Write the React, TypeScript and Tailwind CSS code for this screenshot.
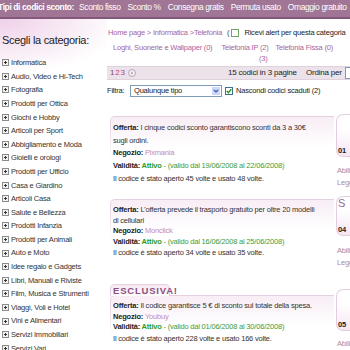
import React from 'react';

const tipi = ['Sconto fisso', 'Sconto %', 'Consegna gratis', 'Permuta usato', 'Omaggio gratuito'];

const categories = [
	'Informatica',
	'Audio, Video e Hi-Tech',
	'Fotografia',
	'Prodotti per Ottica',
	'Giochi e Hobby',
	'Articoli per Sport',
	'Abbigliamento e Moda',
	'Gioielli e orologi',
	'Prodotti per Ufficio',
	'Casa e Giardino',
	'Articoli Casa',
	'Salute e Bellezza',
	'Prodotti Infanzia',
	'Prodotti per Animali',
	'Auto e Moto',
	'Idee regalo e Gadgets',
	'Libri, Manuali e Riviste',
	'Film, Musica e Strumenti',
	'Viaggi, Voli e Hotel',
	'Vini e Alimentari',
	'Servizi Immobiliari',
	'Servizi Vari',
];

interface Offer {
	id: string;
	lines: string[];
	shop: string;
	from: string;
	to: string;
	opened: number;
	used: number;
	num: string;
	label: string;
	exclusive?: boolean;
	rowClass: string;
	leadClass: string;
	colClass: string;
	boxClass: string;
	linksClass: string;
}

const offers: Offer[] = [
	{
		id: 'o1',
		lines: ['I cinque codici sconto garantiscono sconti da 3 a 30€', 'sugli ordini.'],
		shop: 'Pixmania',
		from: '19/06/2008',
		to: '22/06/2008',
		opened: 45,
		used: 48,
		num: '01',
		label: '',
		rowClass: 'h-[83px]',
		leadClass: 'leading-[12.5px]',
		colClass: '-mt-[2px]',
		boxClass: 'h-[43px]',
		linksClass: 'mt-[8px]',
	},
	{
		id: 'o2',
		lines: ["L'offerta prevede il trasporto gratuito per oltre 20 modelli", 'di cellulari'],
		shop: 'Monclick',
		from: '16/06/2008',
		to: '25/06/2008',
		opened: 34,
		used: 35,
		num: '04',
		label: 'S',
		rowClass: 'h-[85px]',
		leadClass: 'leading-[10.5px]',
		colClass: '-mt-[3px]',
		boxClass: 'h-[40px]',
		linksClass: 'mt-[9px]',
	},
	{
		id: 'o3',
		lines: ['Il codice garantisce 5 € di sconto sul totale della spesa.'],
		shop: 'Youbuy',
		from: '01/06/2008',
		to: '30/06/2008',
		opened: 228,
		used: 166,
		num: '05',
		label: '',
		exclusive: true,
		rowClass: 'h-[80px]',
		leadClass: 'leading-[10.5px]',
		colClass: 'mt-[5px]',
		boxClass: 'h-[42px]',
		linksClass: 'mt-[7px]',
	},
];

const PlusBox = () => (
	<svg width="7" height="7" viewBox="0 0 7 7" className="mr-[2px] shrink-0">
		<rect x="0.5" y="0.5" width="6" height="6" fill="#f2f2f2" stroke="#8c8c8c" />
		<path d="M2 3.5h3M3.5 2v3" stroke="#333" strokeWidth="1" />
	</svg>
);

const CheckBox = ({ checked }: { checked?: boolean }) => (
	<svg width="8" height="8" viewBox="0 0 8 8" className="shrink-0">
		<rect x="0.5" y="0.5" width="7" height="7" fill="#fff" stroke={checked ? '#3f6f8f' : '#6aa86a'} />
		{checked && <path d="M1.8 4l1.6 1.7L6.3 2.2" fill="none" stroke="#1f9a1f" strokeWidth="1.4" />}
	</svg>
);

const OfferCard = ({ o }: { o: Offer }) => (
	<div className={`flex items-start ${o.rowClass}`}>
		<div className="ml-[3px] w-[224px] shrink-0">
			{o.exclusive && (
				<div className="relative z-10 -mb-px h-[12px] w-[60px] rounded-t-[5px] border border-b-0 border-[#e6cfe0] bg-[linear-gradient(to_bottom,#f7e8f2,#ffffff)] pl-[2px] text-[9.5px] font-bold leading-[12px] tracking-[0.8px] text-[#8c4f80]">
					ESCLUSIVA!
				</div>
			)}
			<div
				className={`rounded-tl-[5px] border-t border-[#e6cfe0] bg-[linear-gradient(to_bottom,#e6cfe0,rgba(255,255,255,0)_42px),linear-gradient(to_bottom,#f8edf5,#ffffff_30px)] bg-[length:1px_100%,100%_100%] bg-no-repeat pl-[3px] pt-[5px] ${o.leadClass}`}
			>
				{o.lines.map((line, i) => (
					<div key={i} className="whitespace-nowrap">
						{i === 0 && <b className="text-[#222]">Offerta: </b>}
						{line}
					</div>
				))}
				<div className="whitespace-nowrap">
					<b className="text-[#222]">Negozio: </b>
					<span className="text-[#c58ab6]">{o.shop}</span>
				</div>
				<div className="whitespace-nowrap">
					<b className="text-[#222]">Validità: </b>
					<b className="text-[#2e9a2e]">Attivo</b>
					<span className="text-[#3c9c3c]">
						{' '}
						- (valido dal {o.from} al {o.to})
					</span>
				</div>
				<div className="mt-[1px] whitespace-nowrap">
					Il codice è stato aperto {o.opened} volte e usato {o.used} volte.
				</div>
			</div>
		</div>
		<div className={`ml-[2px] w-[40px] shrink-0 ${o.colClass}`}>
			<div
				className={`flex flex-col justify-between rounded-l-[7px] border border-r-0 border-[#e4cdde] bg-[linear-gradient(to_bottom,#ffffff_35%,#f6e6f1)] pl-[1px] ${o.boxClass}`}
			>
				<span className="text-[11px] leading-[12px] text-[#8f6f89]">{o.label}</span>
				<span className="text-[7.5px] font-bold leading-[10px] text-[#222]">{o.num}</span>
			</div>
			<div className={`pl-[1px] leading-[12px] text-[#a88ba2] ${o.linksClass}`}>
				<div className="whitespace-nowrap">Abilita</div>
				<div className="whitespace-nowrap">Leggi</div>
			</div>
		</div>
	</div>
);

export default function App() {
	return (
		<div className="h-[350px] w-[350px] overflow-hidden bg-white font-['Liberation_Sans',Arial,sans-serif] text-[7.5px] tracking-[-0.2px] text-[#333]">
			{/* Top bar */}
			<div className="h-[19px] overflow-hidden border-b-2 border-[#83587a] bg-[#a17595]">
				<div className="-ml-[2px] flex h-[17px] items-center whitespace-nowrap pb-[3px] text-[8.5px] tracking-[-0.4px] text-white">
					<b className="mr-[5px]">Tipi di codici sconto:</b>
					<div className="flex gap-[7px]">
						{tipi.map((t) => (
							<span key={t}>{t}</span>
						))}
					</div>
				</div>
			</div>

			<div className="flex">
				{/* Sidebar */}
				<div className="w-[107px] shrink-0 bg-[radial-gradient(125px_55px_at_0%_0%,#efd0e8,#ffffff)] bg-no-repeat">
					<div className="h-[37px] pl-[2px] pt-[14px]">
						<h2 className="text-[11px] font-normal leading-[14px] tracking-[-0.3px] text-[#222]">
							Scegli la categoria:
						</h2>
					</div>
					<ul className="pl-[2px]">
						{categories.map((c) => (
							<li key={c} className="flex h-[13.6px] items-center whitespace-nowrap text-[#333]">
								<PlusBox />
								{c}
							</li>
						))}
					</ul>
				</div>

				{/* Main */}
				<div className="w-[300px] shrink-0 pt-[7px]">
					<div className="flex h-[13px] items-center whitespace-nowrap pl-[1px]">
						<span className="text-[#a8659a]">Home page &gt; Informatica &gt;Telefonia</span>
						<span className="ml-[5px] mr-[2px]">(</span>
						<CheckBox />
						<span className="ml-[5px] text-[#222]">Ricevi alert per questa categoria</span>
					</div>

					<div className="mt-[3px] leading-[11px] text-[#a8659a]">
						<div className="flex whitespace-nowrap pl-[6px]">
							<span>Loghi, Suonerie e Wallpaper (0)</span>
							<span className="ml-[9px]">Telefonia IP (2)</span>
							<span className="ml-[7px]">Telefonia Fissa (0)</span>
						</div>
						<div className="pl-[152px]">(3)</div>
					</div>

					<div className="mt-[2px] flex h-[14px] items-center whitespace-nowrap border-y border-[#e0d2dc] bg-[#ece2ea] text-[8px]">
						<div className="flex w-[121px] items-center pl-[3px]">
							<span className="text-[#7c4a72]">1</span>
							<span className="ml-[1px] text-[#d23c70]">2</span>
							<span className="ml-[1px] text-[#9a4a8c]">3</span>
							<svg width="8" height="8" viewBox="0 0 8 8" className="ml-[3px]">
								<circle cx="4" cy="4" r="3.5" fill="#f4eef3" stroke="#b7a8b5" />
								<path d="M3.2 2.4L5.2 4L3.2 5.6z" fill="#a898a6" />
							</svg>
						</div>
						<span className="w-[78px] text-[#222]">15 codici in 3 pagine</span>
						<span className="text-[#222]">Ordina per</span>
						<span className="ml-[3px] h-[12px] w-[40px] border border-[#7f9db9] bg-white" />
					</div>

					<div className="mt-[4px] flex h-[13px] items-center whitespace-nowrap">
						<span className="w-[23px] text-[#222]">Filtra:</span>
						<div className="flex h-[12px] w-[92px] items-center justify-between border border-[#7f9db9] bg-white pl-[3px]">
							<span className="text-[#222]">Qualunque tipo</span>
							<span className="mr-[1px] flex h-[8px] w-[8px] items-center justify-center bg-[#c9d8fb]">
								<svg width="6" height="4" viewBox="0 0 6 4">
									<path d="M0.8 0.8L3 3L5.2 0.8" fill="none" stroke="#3a54a0" strokeWidth="1.2" />
								</svg>
							</span>
						</div>
						<span className="ml-[3px]">
							<CheckBox checked />
						</span>
						<span className="ml-[3px] text-[#222]">Nascondi codici scaduti (2)</span>
					</div>

					<div className="mt-[19px]">
						{offers.map((o) => (
							<OfferCard key={o.id} o={o} />
						))}
					</div>
				</div>
			</div>
		</div>
	);
}
